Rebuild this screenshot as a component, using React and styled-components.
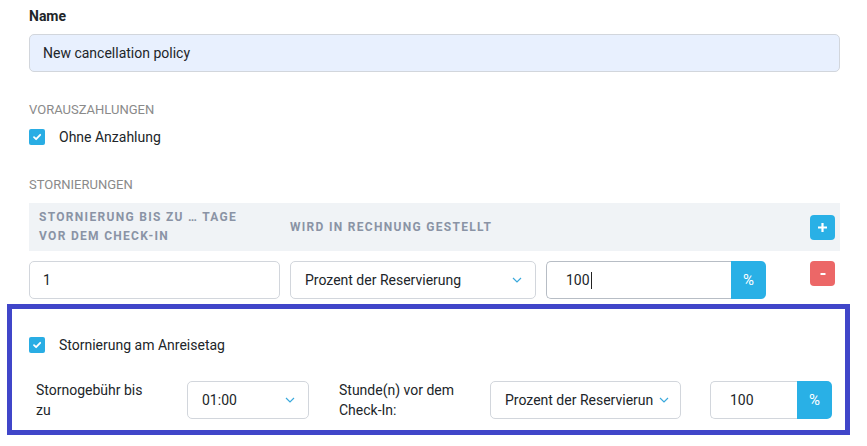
import React from "react";
import styled, { createGlobalStyle } from "styled-components";

const GlobalStyle = createGlobalStyle`
  * { box-sizing: border-box; }
  body {
    margin: 0;
    background: #fff;
    font-family: Roboto, "Liberation Sans", Arial, sans-serif;
    color: #212529;
  }
`;

const Page = styled.div`
  width: 867px;
  padding: 5px 0 0 7px;
`;

const Main = styled.div`
  width: 833px;
  padding-left: 22px;
`;

const FieldLabel = styled.div`
  font-size: 14px;
  font-weight: 700;
  line-height: 22px;
  margin-bottom: 7px;
`;

const TextInput = styled.div`
  height: 38px;
  display: flex;
  align-items: center;
  padding: 0 ${(p) => p.$padLeft || 13}px;
  font-size: 14px;
  border: 1px solid ${(p) => (p.$focus ? "#b7bdc5" : "#d2d6dc")};
  border-radius: 5px;
  background: ${(p) => (p.$filled ? "#e8f0fe" : "#fff")};
  width: ${(p) => p.$width || "100%"};
  ${(p) => p.$flat && "border-top-right-radius: 0; border-bottom-right-radius: 0; border-right: none;"}
`;

const Caret = styled.span`
  display: inline-block;
  width: 1px;
  height: 17px;
  background: #222;
  margin-left: 1px;
`;

const SectionTitle = styled.div`
  font-size: 13px;
  color: #8a8a8a;
  text-transform: uppercase;
  line-height: 18px;
  margin-top: ${(p) => p.$top}px;
`;

const CheckRow = styled.div`
  display: flex;
  align-items: center;
  gap: 14px;
  font-size: 14px;
  height: 18px;
  margin-top: ${(p) => p.$top}px;
`;

const Box = styled.span`
  width: 16px;
  height: 16px;
  border-radius: 2px;
  background: #29ade4;
  display: flex;
  align-items: center;
  justify-content: center;
  flex: none;
`;

const Check = () => (
  <Box>
    <svg width="10" height="10" viewBox="0 0 10 10">
      <path d="M2 5.2 L4.1 7.2 L8.2 2.8" fill="none" stroke="#fff" strokeWidth="1.8" strokeLinecap="round" strokeLinejoin="round" />
    </svg>
  </Box>
);

const Grid = styled.div`
  display: grid;
  grid-template-columns: 251px 246px 220px 1fr;
  column-gap: 10px;
  align-items: center;
`;

const HeadRow = styled(Grid)`
  margin-top: 9px;
  height: 48px;
  background: #f0f3f6;
  padding-right: 5px;
`;

const HeadCell = styled.div`
  font-size: 12px;
  font-weight: 700;
  letter-spacing: 1.3px;
  color: #8a93a5;
  line-height: 19px;
  white-space: nowrap;
  padding-left: ${(p) => p.$pad || 0}px;
`;

const BodyRow = styled(Grid)`
  margin-top: 10px;
  padding-right: 5px;
  align-items: start;
`;

const IconButton = styled.div`
  justify-self: end;
  width: 25px;
  height: 25px;
  border-radius: 4px;
  background: ${(p) => p.$color};
  display: flex;
  align-items: center;
  justify-content: center;
`;

const Select = styled.div`
  height: 38px;
  width: ${(p) => p.$width || "100%"};
  display: flex;
  align-items: center;
  padding: 0 ${(p) => p.$padRight || 13}px 0 14px;
  border: 1px solid #d2d6dc;
  border-radius: 5px;
  font-size: 14px;
  gap: 6px;
  flex: none;
`;

const SelectText = styled.span`
  flex: 1;
  white-space: nowrap;
  overflow: hidden;
`;

const Chevron = () => (
  <svg width="10" height="6" viewBox="0 0 10 6" style={{ flex: "none" }}>
    <path d="M1 1 L5 5 L9 1" fill="none" stroke="#3aa9dc" strokeWidth="1.2" />
  </svg>
);

const Group = styled.div`
  display: flex;
  width: ${(p) => p.$width};
  flex: none;
`;

const Addon = styled.div`
  width: 35px;
  height: 38px;
  flex: none;
  background: #29b0e6;
  color: #fff;
  font-size: 15px;
  display: flex;
  align-items: center;
  justify-content: center;
  border-radius: 0 5px 5px 0;
`;

const Highlight = styled.div`
  margin-top: 5px;
  width: 843px;
  height: 131px;
  border: 5px solid #4046c9;
  padding: 27px 0 0 17px;
`;

const FeeRow = styled.div`
  display: flex;
  align-items: center;
  margin-top: 26px;
`;

const FeeLabel = styled.div`
  width: ${(p) => p.$width}px;
  padding: 0 ${(p) => p.$right}px 0 ${(p) => p.$left}px;
  font-size: 14px;
  line-height: 20px;
  flex: none;
`;

const Spacer = styled.div`
  width: ${(p) => p.$w}px;
  flex: none;
`;

const Plus = () => (
  <svg width="11" height="11" viewBox="0 0 11 11">
    <path d="M5.5 1 V10 M1 5.5 H10" stroke="#fff" strokeWidth="2.2" />
  </svg>
);

const Minus = () => (
  <svg width="8" height="8" viewBox="0 0 8 8">
    <path d="M1.5 4 H6.5" stroke="#fff" strokeWidth="2" />
  </svg>
);

export default function App() {
  return (
    <Page>
      <GlobalStyle />
      <Main>
        <FieldLabel>Name</FieldLabel>
        <TextInput $filled>New cancellation policy</TextInput>

        <SectionTitle $top={29}>Vorauszahlungen</SectionTitle>
        <CheckRow $top={9}>
          <Check />
          Ohne Anzahlung
        </CheckRow>

        <SectionTitle $top={30}>Stornierungen</SectionTitle>
        <HeadRow>
          <HeadCell $pad={10}>
            STORNIERUNG BIS ZU … TAGE
            <br />
            VOR DEM CHECK-IN
          </HeadCell>
          <HeadCell>WIRD IN RECHNUNG GESTELLT</HeadCell>
          <div />
          <IconButton $color="#29b0e6">
            <Plus />
          </IconButton>
        </HeadRow>
        <BodyRow>
          <TextInput>1</TextInput>
          <Select>
            <SelectText>Prozent der Reservierung</SelectText>
            <Chevron />
          </Select>
          <Group $width="220px">
            <TextInput $flat $focus $padLeft={19}>
              100
              <Caret />
            </TextInput>
            <Addon>%</Addon>
          </Group>
          <IconButton $color="#ec6767">
            <Minus />
          </IconButton>
        </BodyRow>
      </Main>

      <Highlight>
        <CheckRow $top={0}>
          <Check />
          Stornierung am Anreisetag
        </CheckRow>
        <FeeRow>
          <FeeLabel $width={158} $left={7} $right={33}>
            Stornogebühr bis zu
          </FeeLabel>
          <Select $width="122px">
            <SelectText>01:00</SelectText>
            <Chevron />
          </Select>
          <Spacer $w={30} />
          <FeeLabel $width={151} $left={0} $right={20}>
            Stunde(n) vor dem Check-In:
          </FeeLabel>
          <Select $width="191px" $padRight={11}>
            <SelectText>Prozent der Reservierung</SelectText>
            <Chevron />
          </Select>
          <Spacer $w={29} />
          <Group $width="122px">
            <TextInput $flat $padLeft={19}>
              100
            </TextInput>
            <Addon>%</Addon>
          </Group>
        </FeeRow>
      </Highlight>
    </Page>
  );
}
